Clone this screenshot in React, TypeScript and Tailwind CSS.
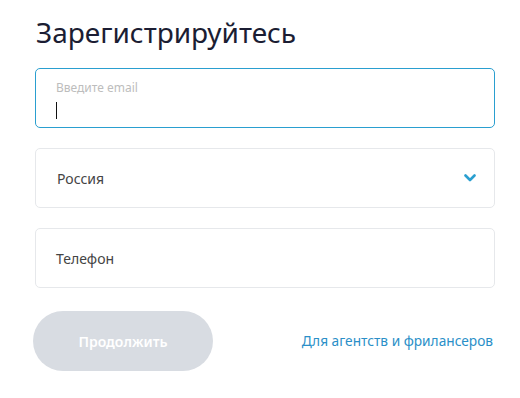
export default function App() {
  return (
    <div className="min-h-[398px] w-[520px] bg-white" style={{ fontFamily: '"Noto Sans", Roboto, sans-serif' }}>
      <div className="flex w-[460px] flex-col pl-[35px] pt-[13px] box-content">
        <h1 className="ml-[1px] text-[28px] leading-[38px] text-[#1b1d33]">Зарегистрируйтесь</h1>
        <div className="mt-[17px] flex h-[60px] flex-col rounded-[5px] border border-[#2a9fd0] px-[20px] pt-[11px]">
          <span className="text-[12px] leading-[16px] text-[#bdbdbd]">Введите email</span>
          <div className="mt-[6px] h-[17px] w-[1px] bg-[#111]" />
        </div>
        <div className="mt-[20px] flex h-[60px] items-center justify-between rounded-[5px] border border-[#e6e8eb] pl-[21px] pr-[18px]">
          <span className="text-[14px] text-[#444]">Россия</span>
          <svg width="12" height="8" viewBox="0 0 12 8" fill="none">
            <path d="M1.5 1.5L6 6L10.5 1.5" stroke="#2a9fd0" strokeWidth="2.6" strokeLinecap="round" strokeLinejoin="round" />
          </svg>
        </div>
        <div className="mt-[20px] flex h-[60px] items-center rounded-[5px] border border-[#e6e8eb] pl-[20px]">
          <span className="text-[14px] text-[#444]">Телефон</span>
        </div>
        <div className="mt-[23px] flex items-center justify-between">
          <button className="-ml-[2px] h-[60px] w-[180px] rounded-full bg-[#d8dce2] text-[14px] font-semibold text-white">
            Продолжить
          </button>
          <span className="mr-[2px] text-[13.7px] text-[#2a8fc8]">Для агентств и фрилансеров</span>
        </div>
      </div>
    </div>
  );
}
